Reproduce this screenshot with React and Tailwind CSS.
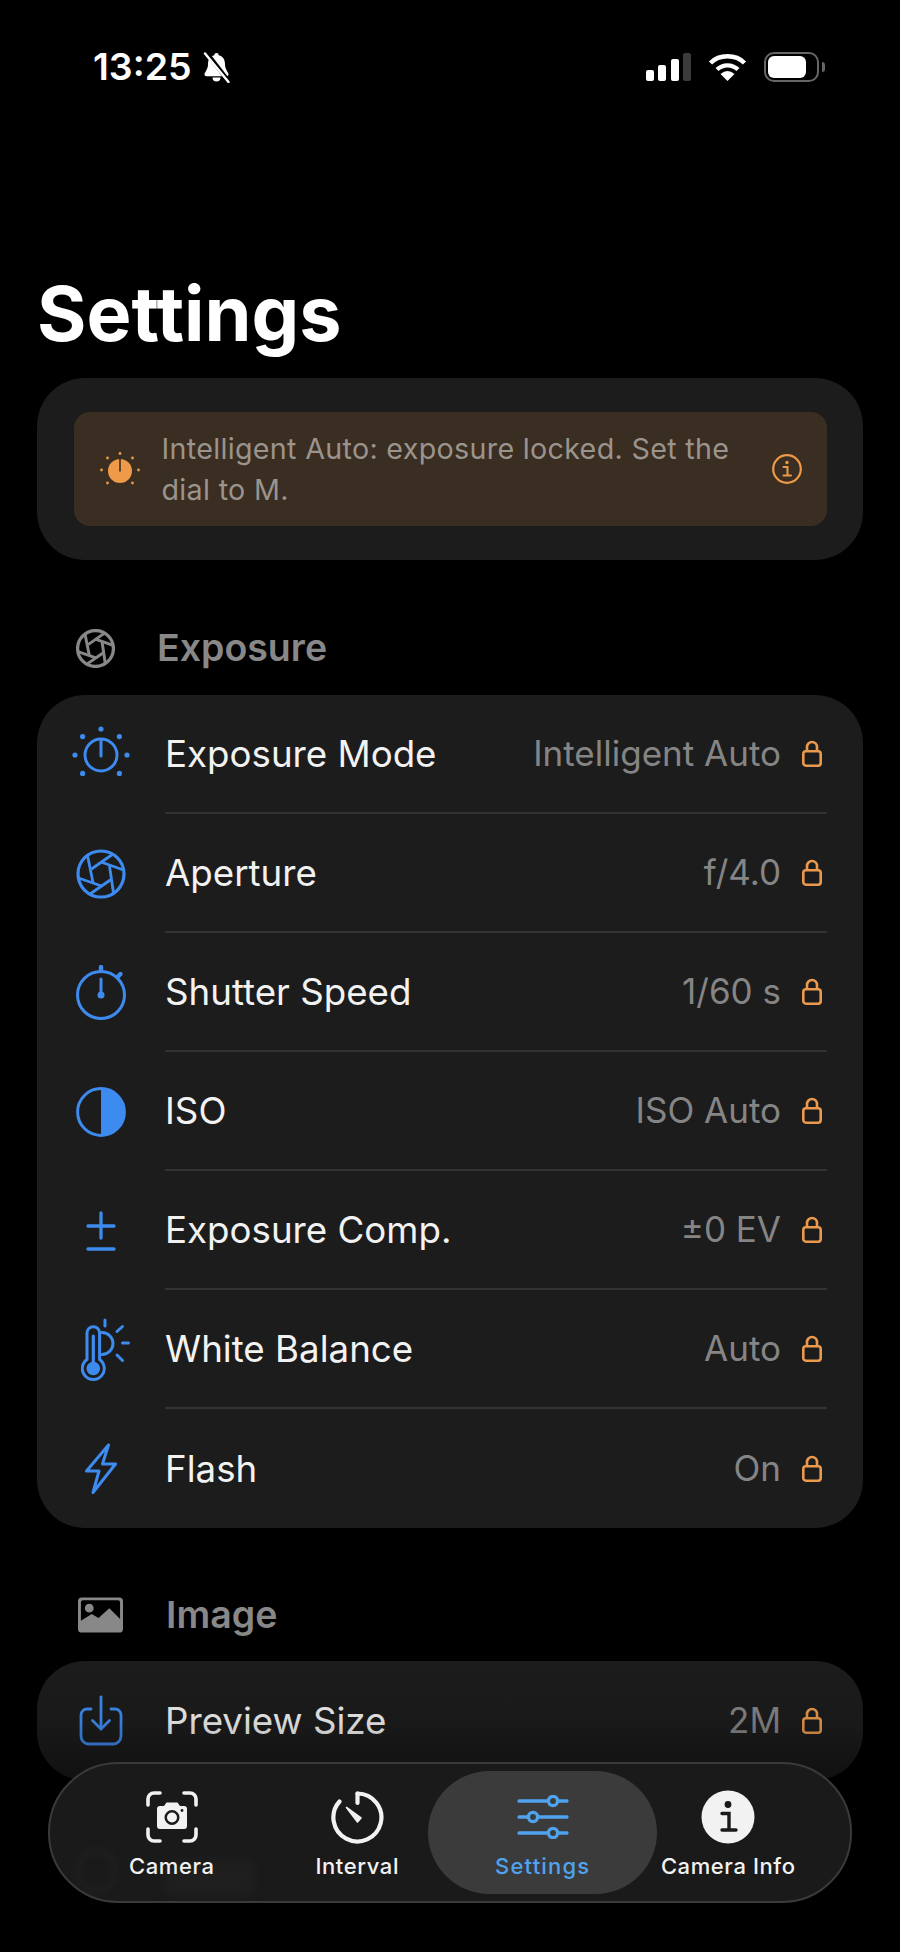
const font = "font-['Inter','Liberation_Sans',sans-serif]";

function Dial({ className }) {
  const dots = [
    [30, 4],
    [48.4, 11.6],
    [56, 30],
    [48.4, 48.4],
    [11.6, 48.4],
    [4, 30],
    [11.6, 11.6],
  ];
  return (
    <svg viewBox="0 0 60 60" className={className} fill="none" stroke="currentColor" strokeWidth="3">
      {dots.map(([x, y]) => (
        <circle key={`${x}-${y}`} cx={x} cy={y} r="2.600" fill="currentColor" stroke="none" />
      ))}
      <circle cx="30" cy="30" r="16" />
      <path d="M30 15V31" strokeLinecap="round" />
    </svg>
  );
}

function DialSolid({ className }) {
  const dots = [
    [20, 1.500],
    [32.500, 6],
    [38.500, 18],
    [32.500, 31],
    [7.500, 31],
    [1.500, 18],
    [7.500, 6],
  ];
  return (
    <svg viewBox="0 0 40 35" className={className}>
      {dots.map(([x, y]) => (
        <circle key={`${x}-${y}`} cx={x} cy={y} r="1.400" fill="currentColor" />
      ))}
      <circle cx="20" cy="19" r="12" fill="currentColor" />
      <path d="M20 7.500V19" stroke="#3a2d22" strokeWidth="1.600" strokeLinecap="round" />
    </svg>
  );
}

function Aperture({ className, weight = 2.8 }) {
  return (
    <svg viewBox="0 0 50 50" className={className} fill="none" stroke="currentColor" strokeWidth={weight}>
      <circle cx="25" cy="25" r="23" strokeWidth={weight + 0.4} />
      <path d="M11.500 6.500 L17 33.500" />
      <path d="M37 5 L15.500 20" />
      <path d="M47.500 21 L25 13" />
      <path d="M37.500 44 L33.500 17" />
      <path d="M14 45 L35 30.500" />
      <path d="M2.500 29 L25.500 37" />
    </svg>
  );
}

function Stopwatch({ className }) {
  return (
    <svg viewBox="0 0 50 55" className={className} fill="none" stroke="currentColor" strokeWidth="3">
      <circle cx="25" cy="30" r="23.500" />
      <path d="M25 2V6" strokeWidth="4.400" strokeLinecap="round" />
      <path d="M41.500 12L44.500 9" strokeWidth="4.400" strokeLinecap="round" />
      <path d="M25 14V30" strokeLinecap="round" />
      <circle cx="25" cy="30" r="3.500" fill="currentColor" stroke="none" />
    </svg>
  );
}

function HalfCircle({ className }) {
  return (
    <svg viewBox="0 0 50 50" className={className} fill="none">
      <circle cx="25" cy="25" r="23.400" stroke="currentColor" strokeWidth="3" />
      <path d="M25 1.600A23.400 23.400 0 0 1 25 48.400Z" fill="currentColor" />
    </svg>
  );
}

function PlusMinus({ className }) {
  return (
    <svg viewBox="0 0 30 40" className={className} fill="none" stroke="currentColor" strokeWidth="3.300" strokeLinecap="round">
      <path d="M15 2V27" />
      <path d="M2 15H28" />
      <path d="M2 38H28" />
    </svg>
  );
}

function Thermometer({ className }) {
  return (
    <svg viewBox="0 0 49 64" className={className} fill="none" stroke="currentColor" strokeWidth="3" strokeLinecap="round">
      <path d="M6 15a6.300 6.300 0 0 1 12.600 0v26.500a11 11 0 1 1-12.600 0Z" />
      <circle cx="12.300" cy="50.500" r="6.800" fill="currentColor" stroke="none" />
      <path d="M12.300 18V46" strokeWidth="3.200" />
      <path d="M21 14.500a11 11 0 0 1 0 22" />
      <path d="M24 2V8" />
      <path d="M36 13.500L41.500 8.500" />
      <path d="M41.500 25H47.500" />
      <path d="M36 37L41.500 42.500" />
    </svg>
  );
}

function Bolt({ className }) {
  return (
    <svg viewBox="0 0 33 53" className={className} fill="none" stroke="currentColor" strokeWidth="3" strokeLinejoin="round">
      <path d="M24.500 3L2.500 29H15L9 50.500L31.500 22H18.500Z" />
    </svg>
  );
}

function Tray({ className }) {
  return (
    <svg viewBox="0 0 44 51" className={className} fill="none" stroke="currentColor" strokeWidth="2.800" strokeLinecap="round" strokeLinejoin="round">
      <path d="M12 14H8a6 6 0 0 0-6 6v21a8 8 0 0 0 8 8h24a8 8 0 0 0 8-8V20a6 6 0 0 0-6-6h-4" />
      <path d="M22 2V34" />
      <path d="M13.500 25.500L22 34L30.500 25.500" />
    </svg>
  );
}

function Lock({ className }) {
  return (
    <svg viewBox="0 0 20 27" className={className} fill="none" stroke="currentColor" strokeWidth="2.600">
      <rect x="1.300" y="11.300" width="17.400" height="14.400" rx="2.600" />
      <path d="M5 11V7a5 5 0 0 1 10 0v4" />
    </svg>
  );
}

function PictureIcon({ className }) {
  return (
    <svg viewBox="0 0 46 36" className={className}>
      <path
        fill="currentColor"
        fillRule="evenodd"
        d="M4 0H42a4 4 0 0 1 4 4V32a4 4 0 0 1-4 4H4a4 4 0 0 1-4-4V4a4 4 0 0 1 4-4ZM5 3a2 2 0 0 0-2 2V24L14 17L21 21L32 11L43 22V5a2 2 0 0 0-2-2ZM16 11a4.500 4.500 0 1 0-9 0a4.500 4.500 0 0 0 9 0Z"
      />
    </svg>
  );
}

function CameraFrame({ className }) {
  return (
    <svg viewBox="0 0 52 52" className={className} fill="none">
      <g stroke="currentColor" strokeWidth="3.600" strokeLinecap="round">
        <path d="M14 2H8a6 6 0 0 0-6 6v6" />
        <path d="M38 2h6a6 6 0 0 1 6 6v6" />
        <path d="M14 50H8a6 6 0 0 1-6-6v-6" />
        <path d="M38 50h6a6 6 0 0 0 6-6v-6" />
      </g>
      <path
        fill="currentColor"
        fillRule="evenodd"
        d="M14 15h4l2.500-3.500h11L34 15h4a3 3 0 0 1 3 3v17a3 3 0 0 1-3 3H14a3 3 0 0 1-3-3V18a3 3 0 0 1 3-3ZM26 19a7.500 7.500 0 1 0 0 15a7.500 7.500 0 0 0 0-15ZM26 21.500a5 5 0 1 1 0 10a5 5 0 0 1 0-10Z"
      />
      <circle cx="36" cy="19.500" r="1.400" fill="#1a1a1a" />
    </svg>
  );
}

function Gauge({ className }) {
  return (
    <svg viewBox="0 0 53 53" className={className} fill="none" stroke="currentColor" strokeWidth="4.200" strokeLinecap="round">
      <path d="M26.500 2.500A24 24 0 1 1 8.500 10.500" />
      <path d="M26.500 2.500V12" />
      <path d="M15.500 16.500L30 27L26.500 31Z" fill="currentColor" strokeWidth="1.600" strokeLinejoin="round" />
    </svg>
  );
}

function Sliders({ className }) {
  return (
    <svg viewBox="0 0 52 44" className={className} fill="none" stroke="currentColor" strokeWidth="3.300" strokeLinecap="round">
      <path d="M2 6H30M41 6H50" />
      <circle cx="36" cy="6" r="4.600" />
      <path d="M2 22H10M21 22H50" />
      <circle cx="16" cy="22" r="4.600" />
      <path d="M2 38H30M41 38H50" />
      <circle cx="36" cy="38" r="4.600" />
    </svg>
  );
}

function InfoSolid({ className }) {
  return (
    <svg viewBox="0 0 54 54" className={className}>
      <circle cx="27" cy="27" r="26.500" fill="currentColor" />
      <circle cx="27" cy="14.500" r="3.400" fill="#1a1a1a" />
      <path d="M21 23.500H28V40M21 40H35" fill="none" stroke="#1a1a1a" strokeWidth="3.400" strokeLinecap="round" />
    </svg>
  );
}

function InfoOutline({ className }) {
  return (
    <svg viewBox="0 0 30 30" className={className} fill="none" stroke="currentColor">
      <circle cx="15" cy="15" r="13.800" strokeWidth="2.200" />
      <circle cx="15" cy="8.500" r="1.700" fill="currentColor" stroke="none" />
      <path d="M11.500 13H15.500V21.500M11.500 21.500H19" strokeWidth="2" strokeLinecap="round" />
    </svg>
  );
}

function BellSlash({ className }) {
  return (
    <svg viewBox="0 0 31 31" className={className}>
      <path
        fill="currentColor"
        d="M15.500 1a2.200 2.200 0 0 1 2.200 2.300c4.600 1 6.300 4.600 6.300 9 0 5.500 3.500 8 3.500 10.200 0 1-.8 1.700-2 1.700H5.500c-1.200 0-2-.7-2-1.700 0-2.200 3.500-4.700 3.500-10.200 0-4.400 1.700-8 6.300-9A2.200 2.200 0 0 1 15.500 1ZM11.500 25.500h8a4 4 0 0 1-8 0Z"
      />
      <path d="M5 0L29 31" stroke="black" strokeWidth="4.400" />
      <path d="M4 1.500L27.500 30" stroke="white" strokeWidth="2.400" strokeLinecap="round" />
    </svg>
  );
}

const exposureRows = [
  { label: "Exposure Mode", value: "Intelligent Auto", icon: <Dial className="h-[60px] w-[60px]" /> },
  { label: "Aperture", value: "f/4.0", icon: <Aperture className="h-[50px] w-[50px]" /> },
  { label: "Shutter Speed", value: "1/60 s", icon: <Stopwatch className="h-[55px] w-[50px]" /> },
  { label: "ISO", value: "ISO Auto", icon: <HalfCircle className="h-[50px] w-[50px]" /> },
  { label: "Exposure Comp.", value: "±0 EV", icon: <PlusMinus className="h-[40px] w-[30px]" /> },
  { label: "White Balance", value: "Auto", icon: <Thermometer className="ml-[10px] h-[64px] w-[49px]" /> },
  { label: "Flash", value: "On", icon: <Bolt className="h-[53px] w-[33px]" /> },
];

function Row({ row, last }) {
  return (
    <div className="flex h-[119px] items-stretch">
      <div className="flex w-[128px] shrink-0 items-center justify-center pr-[1px] text-[#3e8bf0]">
        {row.icon}
      </div>
      <div className={`mr-9 flex min-w-0 flex-1 items-center ${last ? "" : "border-b-2 border-[#333333]"}`}>
        <span className="flex-1 text-[36.700px] text-[#f2f2f2]">{row.label}</span>
        <span className="text-[35px] text-[#858585]">{row.value}</span>
        <Lock className="ml-[21px] mr-[5px] h-[27px] w-[20px] text-[#eb9a4d]" />
      </div>
    </div>
  );
}

function TabItem({ icon, label, active }) {
  return (
    <div
      className={`relative flex w-[185.500px] flex-col items-center pt-[26px] ${active ? "text-[#4fa3ef]" : "text-[#f2f2f2]"}`}
    >
      {active && (
        <div className="absolute left-[-22px] top-[7px] h-[123px] w-[229px] rounded-[62px] bg-[#3b3b3b]" />
      )}
      <div className="relative flex h-[54px] items-center justify-center">{icon}</div>
      <span
        className={`relative mt-[9px] whitespace-nowrap text-[22px] font-medium leading-[26px] ${active ? "tracking-[1.200px]" : "tracking-[0.6px]"}`}
      >
        {label}
      </span>
    </div>
  );
}

export default function App() {
  return (
    <div className={`relative h-[1952px] w-[900px] overflow-hidden bg-black ${font}`}>
      {/* status bar */}
      <div className="flex items-center justify-between pl-[93px] pr-[75px] pt-[52px] text-white">
        <div className="flex h-[30px] items-center gap-[9px]">
          <span className="text-[37.500px] font-semibold leading-[30px]">13:25</span>
          <BellSlash className="h-[31px] w-[31px]" />
        </div>
        <div className="flex h-[30px] items-center gap-[17px]">
          <div className="flex h-[28px] items-end gap-[4.500px]">
            <div className="h-[11px] w-[8px] rounded-[2px] bg-white" />
            <div className="h-[16px] w-[8px] rounded-[2px] bg-white" />
            <div className="h-[22px] w-[8px] rounded-[2px] bg-white" />
            <div className="h-[28px] w-[8px] rounded-[2px] bg-[#3b3b3b]" />
          </div>
          <svg viewBox="0 0 39 28" className="h-[28px] w-[39px]" fill="none" stroke="white" strokeWidth="4.400">
            <path d="M2.500 10C11 1 28 1 36.500 10" />
            <path d="M9 16.500C15 11 24 11 30 16.500" />
            <path d="M19.500 28L12.500 21Q19.500 15 26.500 21Z" fill="white" stroke="none" />
          </svg>
          <div className="flex items-center">
            <div className="h-[30px] w-[55px] rounded-[10px] border-2 border-[#666666] p-[2px]">
              <div className="h-full w-[38px] rounded-[6px] bg-white" />
            </div>
            <div className="ml-[3px] h-[10px] w-[3px] rounded-r-sm bg-[#666666]" />
          </div>
        </div>
      </div>

      <div className="px-[37px]">
        <h1 className="mt-[194px] text-[75.500px] font-bold leading-[76px] text-white">Settings</h1>

        {/* warning card */}
        <div className="mt-[26px] rounded-[48px] bg-[#1c1c1c] px-[36.500px] py-[34px]">
          <div className="flex h-[114px] items-center rounded-[16px] bg-[#3a2d22] pl-[26px] pr-[25px]">
            <DialSolid className="h-[35px] w-[40px] shrink-0 text-[#ee9a48]" />
            <p className="ml-[22px] flex-1 text-[28.700px] leading-[41px] text-[#9a948d] tracking-[0.3px]">
              Intelligent Auto: exposure locked. Set the dial to M.
            </p>
            <InfoOutline className="ml-[10px] h-[30px] w-[30px] shrink-0 text-[#ee9a48]" />
          </div>
        </div>

        {/* exposure */}
        <div className="mt-[65px] flex h-[46px] items-center pl-[39px]">
          <Aperture weight={3.8} className="h-[39px] w-[39px] text-[#888888]" />
          <span className="ml-[42px] text-[37.500px] font-semibold text-[#888888]">Exposure</span>
        </div>
        <div className="mt-[24px] rounded-[48px] bg-[#1c1c1c]">
          {exposureRows.map((row, i) => (
            <Row key={row.label} row={row} last={i === exposureRows.length - 1} />
          ))}
        </div>

        {/* image */}
        <div className="mt-[64px] flex h-[46px] items-center pl-[41px]">
          <PictureIcon className="h-[36px] w-[45px] text-[#888888]" />
          <span className="ml-[43px] text-[37.500px] font-semibold text-[#888888]">Image</span>
        </div>
        <div className="relative mt-[23px] overflow-hidden rounded-[48px] bg-[#1c1c1c]">
          <Row last row={{ label: "Preview Size", value: "2M", icon: <Tray className="h-[51px] w-[44px]" /> }} />
          <div className="absolute inset-0 bg-gradient-to-b from-transparent via-black/10 to-black/40" />
        </div>
      </div>

      {/* floating tab bar */}
      <div className="absolute left-[48px] top-[1762px] flex h-[141px] w-[804px] overflow-hidden rounded-[70px] border-2 border-[#3a3a3a] bg-[#1a1a1a] px-[29px]">
        {/* content blurred behind the glass */}
        <div className="absolute left-[26px] top-[84px] h-[46px] w-[42px] rounded-full border-[6px] border-[#1f1f1f] blur-[3px]" />
        <div className="absolute left-[114px] top-[96px] h-[34px] w-[90px] rounded-md bg-[#1f1f1f] blur-[5px]" />
        <TabItem label="Camera" icon={<CameraFrame className="h-[52px] w-[52px]" />} />
        <TabItem label="Interval" icon={<Gauge className="h-[53px] w-[53px]" />} />
        <TabItem active label="Settings" icon={<Sliders className="h-[44px] w-[52px]" />} />
        <TabItem label="Camera Info" icon={<InfoSolid className="h-[54px] w-[54px]" />} />
      </div>
    </div>
  );
}
